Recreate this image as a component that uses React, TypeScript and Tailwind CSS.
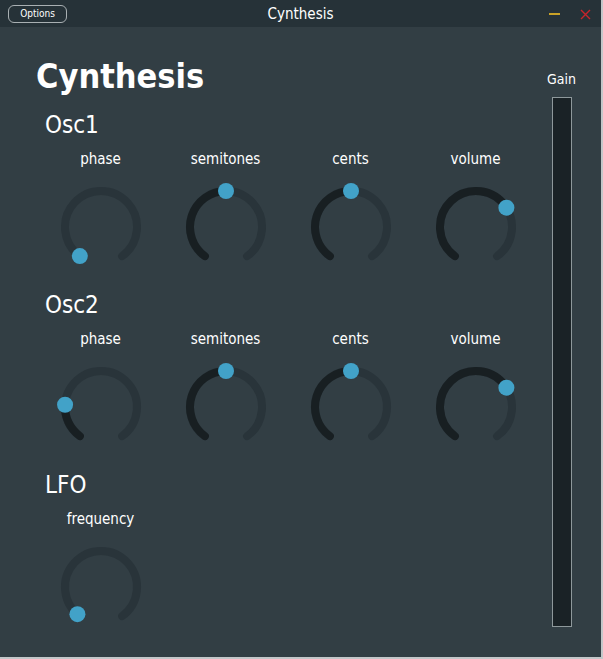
import React from 'react';

const condensed = { fontFamily: '"DejaVu Sans Condensed", "DejaVu Sans", sans-serif' };

const START = Math.PI * 1.2;
const END = Math.PI * 2.8;
const R = 36;

const pointAt = (a: number) => [40 + R * Math.sin(a), 40 - R * Math.cos(a)];

const arcPath = (from: number, to: number) => {
  const [x0, y0] = pointAt(from);
  const [x1, y1] = pointAt(to);
  const large = to - from > Math.PI ? 1 : 0;
  return `M ${x0} ${y0} A ${R} ${R} 0 ${large} 1 ${x1} ${y1}`;
};

const Knob: React.FC<{ label: string; value: number }> = ({ label, value }) => {
  const angle = START + value * (END - START);
  const [tx, ty] = pointAt(angle);
  return (
    <div className="flex flex-col items-center">
      <div className="h-[20px] text-[15px] leading-[20px] text-white font-stretch-condensed">{label}</div>
      <svg width="80" height="80" viewBox="0 0 80 80" className="mt-[18px] overflow-visible">
        <path d={arcPath(START, END)} stroke="#29343a" strokeWidth="8" fill="none" strokeLinecap="round" />
        {value > 0.001 &&
        <path d={arcPath(START, angle)} stroke="#181f22" strokeWidth="8" fill="none" strokeLinecap="round" />
        }
        <circle cx={tx} cy={ty} r="8" fill="#42a2c8" />
      </svg>
    </div>);
};

type Section = { name: string; knobs: { label: string; value: number }[] };

const sections: Section[] = [
{
  name: 'Osc1',
  knobs: [
  { label: 'phase', value: 0 },
  { label: 'semitones', value: 0.5 },
  { label: 'cents', value: 0.5 },
  { label: 'volume', value: 0.7 }]

},
{
  name: 'Osc2',
  knobs: [
  { label: 'phase', value: 0.2 },
  { label: 'semitones', value: 0.5 },
  { label: 'cents', value: 0.5 },
  { label: 'volume', value: 0.7 }]

},
{
  name: 'LFO',
  knobs: [{ label: 'frequency', value: 0.017 }]
}];


const App: React.FC = () => {
  return (
    <div
      className="w-[603px] h-[659px] bg-[#323e44] border-r-2 border-b-2 border-[#c3c7c9] flex flex-col overflow-hidden text-white"
      style={condensed}>

      {/* Title bar */}
      <div className="h-[27px] shrink-0 bg-[#263238] grid grid-cols-[1fr_auto_1fr] items-center">
        <div className="pl-[8px]">
          <div className="w-[59px] h-[18px] rounded-[6px] border border-[#a9b0b3] flex items-center justify-center text-[10px] leading-none">
            Options
          </div>
        </div>
        <div className="text-[15px] leading-[27px] pt-[1px]">Cynthesis</div>
        <div className="flex items-center justify-end gap-[20px] pr-[10px]">
          <svg width="11" height="4" viewBox="0 0 11 4">
            <line x1="0" y1="2" x2="11" y2="2" stroke="#c9a227" strokeWidth="2" />
          </svg>
          <svg width="11" height="11" viewBox="0 0 11 11">
            <path d="M1 1 L10 10 M10 1 L1 10" stroke="#c8242b" strokeWidth="1.4" />
          </svg>
        </div>
      </div>

      <div className="flex flex-1">
        {/* Main panel */}
        <div className="flex-1 pl-[36px] pt-[29px]">
          <h1 className="text-[34px] leading-[40px] h-[40px] font-bold">Cynthesis</h1>
          <div className="mt-[14px]">
            {sections.map((s) =>
            <div key={s.name} className="h-[180px]">
                <h2 className="ml-[9px] text-[24px] leading-[30px] h-[30px]">{s.name}</h2>
                <div className="mt-[9px] ml-[2px] grid grid-cols-[repeat(4,125px)]">
                  {s.knobs.map((k) =>
                <Knob key={k.label} label={k.label} value={k.value} />
                )}
                </div>
              </div>
            )}
          </div>
        </div>

        {/* Gain */}
        <div className="w-[60px] mr-[16px] pt-[42px] flex flex-col items-center">
          <div className="text-[14px] leading-[20px] h-[20px]">Gain</div>
          <div className="mt-[8px] w-[20px] h-[530px] bg-[#1a2226] border border-[#8e989b]" />
        </div>
      </div>
    </div>);

};

export default App;
